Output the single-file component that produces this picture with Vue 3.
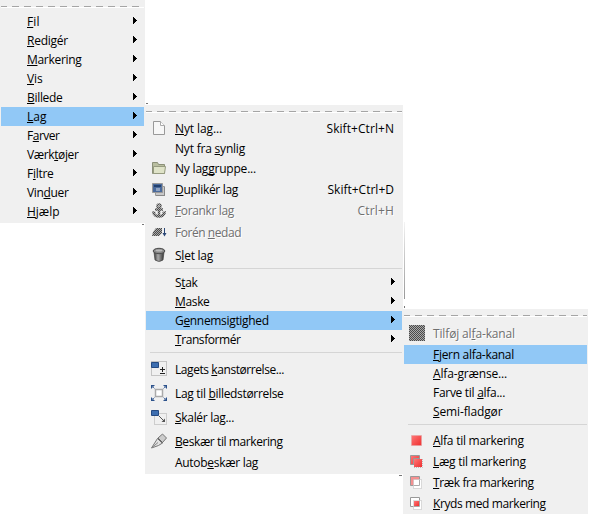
<script setup>
import { ref, onMounted } from 'vue'

const row = (label, width, extra = {}) => ({ label, width, h: 19, ...extra })
const sub = { arrow: true }

const menus = [
  {
    name: 'main',
    rows: [
      row('_Fil', 12.5, sub),
      row('_Redigér', 41, sub),
      row('_Markering', 54.5, sub),
      row('_Vis', 15.5, sub),
      row('_Billede', 35.5, sub),
      row('_Lag', 19.5, { arrow: true, active: true }),
      row('F_arver', 32.5, sub),
      row('Værk_tøjer', 51.5, sub),
      row('F_iltre', 26.5, sub),
      row('Vin_duer', 41.5, sub),
      row('_Hjælp', 32.5, sub),
    ],
  },
  {
    name: 'layer',
    rows: [
      row('_Nyt lag...', 47, { h: 22, icon: 'page', key: 'Skift+Ctrl+N', kw: 67.5 }),
      row('Nyt fra _synlig', 70, { h: 18 }),
      row('Ny lag_gruppe...', 81, { h: 22, icon: 'folder' }),
      row('_Duplikér lag', 63, { h: 21, icon: 'duplicate', key: 'Skift+Ctrl+D', kw: 66.5 }),
      row('_Forankr lag', 59, { h: 21, icon: 'anchor', key: 'Ctrl+H', kw: 36.5, off: true }),
      row('Forén _nedad', 66, { h: 22, icon: 'merge', off: true }),
      row('S_let lag', 38, { h: 24, icon: 'trash' }),
      { sep: true, h: 6, top: 1 },
      row('S_tak', 22.5, sub),
      row('_Maske', 34.5, sub),
      row('G_ennemsigtighed', 93.7, { arrow: true, active: true }),
      row('_Transformér', 65.5, sub),
      { sep: true, h: 8, top: 3 },
      row('Lagets _kanstørrelse...', 109, { h: 24, icon: 'bounds' }),
      row('Lag til _billedstørrelse', 108.5, { h: 24, icon: 'fit' }),
      row('_Skalér lag...', 59, { h: 24, icon: 'scale' }),
      row('_Beskær til markering', 107.7, { h: 24, icon: 'knife' }),
      row('Autob_eskær lag', 83),
    ],
  },
  {
    name: 'alpha',
    rows: [
      row('Tilføj al_fa-kanal', 82, { h: 24, icon: 'checker', off: true }),
      row('_Fjern alfa-kanal', 81, { active: true }),
      row('_Alfa-grænse...', 74),
      row('Farve til _alfa...', 72),
      row('_Semi-fladgør', 69.5),
      { sep: true, h: 9, top: 3 },
      row('_Alfa til markering', 90.7, { h: 21, icon: 'selReplace' }),
      row('_Læg til markering', 92.7, { h: 21, icon: 'selAdd' }),
      row('_Træk fra markering', 100.7, { h: 21, icon: 'selSubtract' }),
      row('_Kryds med markering', 112.7, { h: 21, icon: 'selIntersect' }),
    ],
  },
]

// "_" marks the mnemonic letter that follows it
const parts = (label) => {
  const i = label.indexOf('_')
  return [label.slice(0, i), label[i + 1], label.slice(i + 2)]
}

const root = ref(null)
// Spread tracking so each caption takes its nominal width
onMounted(() => {
  root.value.querySelectorAll('[data-width]').forEach((el) => {
    const natural = el.getBoundingClientRect().width
    const gap = (Number(el.dataset.width) - natural) / el.textContent.length
    el.style.letterSpacing = gap.toFixed(3) + 'px'
  })
})
</script>

<template>
  <div ref="root" class="screen">
    <svg class="defs" width="0" height="0">
      <defs>
        <pattern id="dither" width="2" height="2" patternUnits="userSpaceOnUse">
          <path d="M0 0h2v2H0z" fill="#aaa" />
          <path d="M0 0h1v1H0zM1 1h1v1H1z" fill="#4a4a4a" />
        </pattern>
        <linearGradient id="red" x1="0" y1="0" x2="1" y2="1">
          <stop offset="0" stop-color="#ff7777" /><stop offset="1" stop-color="#ef3030" />
        </linearGradient>
        <linearGradient id="metal"><stop offset="0" stop-color="#333" /><stop offset=".4" stop-color="#aaa" /><stop offset="1" stop-color="#333" /></linearGradient>
      </defs>
    </svg>
    <section v-for="m in menus" :key="m.name" class="menu" :class="m.name">
      <div class="tear"></div>
      <template v-for="(r, i) in m.rows" :key="i">
        <div v-if="r.sep" class="sep" :style="{ height: r.h + 'px', paddingTop: r.top + 'px' }"><i></i></div>
        <div v-else class="row" :class="{ active: r.active, off: r.off }" :style="{ height: r.h + 'px' }">
          <span class="slot">
            <svg v-if="r.icon" width="16" height="16" viewBox="0 0 16 16">
              <template v-if="r.icon === 'page'">
                <path d="M2.5 1.5h7l4 4v9h-11z" fill="#f7f7f7" stroke="#999" />
                <path d="M9.5 1.5v4h4" fill="#fff" stroke="#aaa" />
              </template>
              <template v-else-if="r.icon === 'folder'">
                <path d="M1.5 13.5v-11h5l1 2h6v9z" fill="#b9bea0" stroke="#8b9078" />
                <path d="M2.5 6.5h12l-1 7h-11z" fill="#dfe3c8" stroke="#969b80" />
              </template>
              <template v-else-if="r.icon === 'duplicate'">
                <path d="M4.500 4.500h9v9h-9z" fill="#c8c8c8" stroke="#999" />
                <path d="M1.5 1.500h10v9h-10z" fill="#4a6a9c" stroke="#999" />
                <path d="M3 3h7v2H3z" fill="#23416f" /><path d="M5 6h4v3H5z" fill="#8fa3c2" />
                <path d="M5 13.500h9M13.500 5v8" stroke="#888" />
              </template>
              <template v-else-if="r.icon === 'anchor'">
                <g fill="none" stroke="url(#dither)">
                  <circle cx="8" cy="3" r="1.700" stroke-width="2" />
                  <path d="M8 4v10M4 6.500h8M2.500 9.500c1 3 3 4 5.500 4s4.500-1 5.500-4" stroke-width="2.500" />
                </g>
                <path d="M1 8l4 1-3 3zM15 8l-4 1 3 3z" fill="url(#dither)" />
              </template>
              <template v-else-if="r.icon === 'merge'">
                <path d="M5 4h6v5l-3 3H1l1-4z" fill="url(#dither)" />
                <path d="M13.500 4v6" stroke="#294675" /><path d="M11.500 9h4l-2 3.500z" fill="#294675" />
              </template>
              <template v-else-if="r.icon === 'trash'">
                <path d="M3 5h10l-1 8q-4 3-8 0z" fill="url(#metal)" stroke="#444" stroke-width=".7" />
                <ellipse cx="8" cy="4" rx="5.800" ry="2.700" fill="#888" stroke="#4b4b4b" />
                <ellipse cx="8" cy="3.500" rx="3.500" ry="1" fill="#bbb" />
              </template>
              <template v-else-if="r.icon === 'bounds'">
                <path d="M.5.500h15v14H.5z" fill="none" stroke="#999" stroke-dasharray="1 1" />
                <path d="M.5 1.500h7v5h-7z" fill="#3d6eb0" stroke="#254a82" />
                <path d="M11.500 6v5M9 8.500h5M9 12.500h5" stroke="#222" />
              </template>
              <template v-else-if="r.icon === 'fit'">
                <path d="M4.500 4.500h7v7h-7z" fill="#fff" stroke="#aaa" stroke-width="1.500" />
                <path d="M0 0h4L0 4zM16 0v4l-4-4zM0 16v-4l4 4zM16 16h-4l4-4z" fill="#2b518b" />
                <path d="M1 1l2.500 2.500M15 1l-2.500 2.500M1 15l2.500-2.500M15 15l-2.500-2.500" stroke="#5f7ba6" />
              </template>
              <template v-else-if="r.icon === 'scale'">
                <path d="M3.500 4.500h12v11h-12z" fill="none" stroke="#aaa" stroke-dasharray="1 1" />
                <path d="M.5 1.500h7v5h-7z" fill="#3d6eb0" stroke="#254a82" />
                <path d="M8 7l5 5" stroke="#555" /><path d="M14 13V9.500L10.500 13z" fill="#555" />
              </template>
              <template v-else-if="r.icon === 'knife'">
                <path d="M.5 15L6.500 5.500l5 4.500-4 2.500z" fill="#e2e2e2" stroke="#777" />
                <path d="M1 14.500l6-5" stroke="#888" />
                <path d="M7 5l4.500-4 4 4-4 4.500z" fill="#ccc" stroke="#777" />
                <path d="M7 5.500l4.500 4.500" stroke="#555" />
              </template>
              <path v-else-if="r.icon === 'checker'" d="M0 0h16v16H0z" fill="url(#dither)" />
              <template v-else-if="r.icon === 'selReplace'">
                <path d="M2.500 2.500h10v10h-10z" fill="url(#red)" stroke="#e0a0a0" stroke-dasharray="1 1" />
              </template>
              <template v-else-if="r.icon === 'selAdd'">
                <path d="M1.500 1.500h9v9h-9z" fill="url(#red)" stroke="#999" />
                <path d="M5 5h8v8H5z" fill="url(#red)" />
                <path d="M5 13.500h8.500V5" fill="none" stroke="#bbb" stroke-dasharray="1 1" />
                <path d="M4.500 10V4.500H10" fill="none" stroke="#999" />
              </template>
              <template v-else-if="r.icon === 'selSubtract'">
                <path d="M1.500 1.500h9v9h-9z" fill="#f49090" stroke="#999" />
                <path d="M4.500 4.500h8v9h-8z" fill="#fff" stroke="#bbb" stroke-dasharray="1 1" />
                <path d="M10.500 5v5.500H5" fill="none" stroke="#aaa" />
              </template>
              <template v-else-if="r.icon === 'selIntersect'">
                <path d="M1.500 1.500h9v9h-9z" fill="#fff" stroke="#999" />
                <path d="M4.500 4.500h8v9h-8z" fill="#fff" stroke="#bbb" stroke-dasharray="1 1" />
                <path d="M5 5h5v5H5z" fill="url(#red)" />
                <path d="M10.500 5v5.500H5" fill="none" stroke="#aaa" />
              </template>
            </svg>
          </span>
          <span class="label"><span :data-width="r.width">{{ parts(r.label)[0] }}<u>{{ parts(r.label)[1] }}</u>{{ parts(r.label)[2] }}</span></span>
          <span v-if="r.key" class="key"><span :data-width="r.kw">{{ r.key }}</span></span>
          <svg v-if="r.arrow" class="arrow" width="5" height="7" viewBox="0 0 5 7" shape-rendering="crispEdges">
            <path d="M0 0h1v1h1v1h1v1h1v1H3v1H2v1H1v1H0z" />
          </svg>
        </div>
      </template>
    </section>
    <span class="edge"></span>
    <span class="speck one"></span>
    <span class="speck two"></span>
    <span class="speck three"></span>
    <span class="speck four"></span>
  </div>
</template>

<style>
body {
  background: #fff;
  overflow: hidden;
}
</style>

<style scoped>
.screen {
  position: relative;
  display: grid;
  grid-template-columns: 145px 258px 185px;
  align-items: start;
  width: 589px;
  height: 514px;
  overflow: hidden;
  background: #fff;
  font: 12px/19px "Open Sans", "Noto Sans", sans-serif;
  color: #000;
}
.defs {
  position: absolute;
}
.menu {
  box-sizing: border-box;
  padding: 0 1px 2px;
  background: #f0f0f0;
}
.layer { margin-top: 105px; }
.alpha { margin-top: 309px; padding-bottom: 0; }
.tear {
  height: 12px;
  background:
    repeating-linear-gradient(90deg, #a5a5a5 0 7px, #f0f0f0 7px 12px) -1px 6px / 300px 1px no-repeat,
    linear-gradient(#fff, #fff) 0 7px / 100% 1px no-repeat;
}
.row {
  display: flex;
  align-items: center;
}
.active { background: #91c8f6; }
.off { color: #6f6f6f; text-shadow: 1px 1px #fff; }
.slot {
  display: flex;
  flex: none;
  width: 24px;
  padding-left: 5px;
}
.main .slot { width: 21px; }
.label {
  flex: 1;
  white-space: nowrap;
}
u {
  text-decoration: underline;
  text-decoration-thickness: 1px;
  text-underline-offset: 1px;
  text-decoration-skip-ink: none;
}
.key {
  padding-right: 8px;
  white-space: nowrap;
}
.arrow {
  flex: none;
  margin: 0 6px 2px 0;
}
.sep {
  box-sizing: border-box;
  padding-left: 4px;
}
.sep i {
  display: block;
  height: 1px;
  background: #d5d5d5;
}
/* remnants of the window frame behind the menus */
.edge {
  position: absolute;
  left: 404px;
  top: 222px;
  width: 1px;
  height: 77px;
  background: linear-gradient(#f4f4f4, #ccc 40%, #999);
}
.speck {
  position: absolute;
  width: 2px;
  height: 1px;
  background: #777;
}
.one { left: 146px; top: 103px; }
.two { left: 142px; top: 224px; }
.three { left: 404px; top: 306px; width: 1px; height: 2px; }
.four { left: 399px; top: 475px; width: 3px; }
</style>
